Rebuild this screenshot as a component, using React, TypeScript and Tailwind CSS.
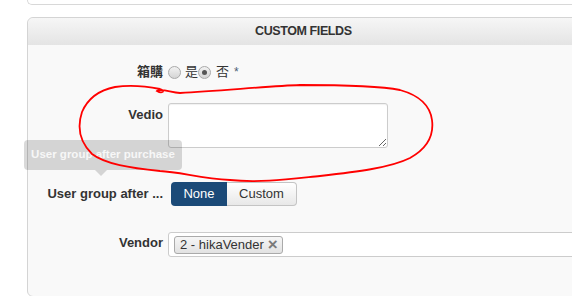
import React from 'react';

const Radio: React.FC<{ checked?: boolean }> = ({ checked }) => (
  <span className="inline-flex h-[13px] w-[13px] items-center justify-center rounded-full border border-[#a9a9a9] bg-gradient-to-b from-[#f2f2f2] to-[#d4d4d4]">
    {checked && <span className="h-[5px] w-[5px] rounded-full bg-[#555]" />}
  </span>
);

const Label: React.FC<{ children: React.ReactNode; className?: string }> = ({ children, className = '' }) => (
  <div className={`w-[135px] shrink-0 text-right text-[13px] font-bold text-[#333] ${className}`}>{children}</div>
);

export default function App() {
  return (
    <div
      className="relative h-[296px] w-[572px] overflow-hidden bg-white"
      style={{ fontFamily: '"Liberation Sans", Arial, "Noto Sans CJK TC", sans-serif' }}
    >
      <div className="pl-[27px]">
        {/* end of previous panel */}
        <div className="h-[5px] w-[560px] rounded-bl-[6px] border-b border-l border-[#d8d8d8] bg-white" />

        <div className="mt-[12px] h-[280px] w-[560px] rounded-[6px] border border-[#d4d4d4] bg-[#f9f9f9]">
          <div className="flex h-[27px] items-center rounded-t-[6px] bg-gradient-to-b from-[#f6f6f6] to-[#e4e4e4] pl-[227px]">
            <span className="text-[12.5px] font-bold tracking-[-0.4px] text-[#333]">CUSTOM FIELDS</span>
          </div>

          {/* 箱購 */}
          <div className="mt-[17px] flex h-[20px] items-center">
            <Label>箱購</Label>
            <div className="ml-[5px] flex items-center text-[13px] text-[#333]">
              <Radio />
              <span className="ml-[4px]">是</span>
              <Radio checked />
              <span className="ml-[5px]">否</span>
              <span className="ml-[5px] text-[12px] text-[#4a5d75]">*</span>
            </div>
          </div>

          {/* Vedio */}
          <div className="mt-[21px] flex items-start">
            <Label className="pt-[2px]">Vedio</Label>
            <textarea className="ml-[5px] h-[45px] w-[220px] resize rounded-[3px] border border-[#ccc] bg-white shadow-[inset_0_1px_1px_rgba(0,0,0,0.06)] outline-none" />
          </div>

          {/* User group after purchase */}
          <div className="mt-[34px] flex items-center">
            <Label>User group after ...</Label>
            <div className="ml-[8px] flex h-[24px] text-[13px]">
              <div className="flex w-[56px] items-center justify-center rounded-l-[4px] bg-[#1b4a78] text-white">None</div>
              <div className="flex w-[70px] items-center justify-center rounded-r-[4px] border border-l-0 border-[#c4c4c4] bg-gradient-to-b from-white to-[#e8e8e8] text-[#333]">
                Custom
              </div>
            </div>
          </div>

          {/* Vendor */}
          <div className="mt-[26px] flex items-start">
            <Label className="pt-[1px]">Vendor</Label>
            <div className="ml-[5px] flex h-[25px] flex-1 items-center rounded-[3px] border border-[#ccc] bg-white pl-[5px]">
              <span className="flex h-[18px] items-center rounded-[3px] border border-[#aaa] bg-gradient-to-b from-[#f6f6f6] to-[#e2e2e2] pl-[5px] pr-[4px] text-[13px] text-[#333]">
                2 - hikaVender
                <span className="ml-[4px] text-[17px] font-bold leading-none text-[#7a7a7a]">×</span>
              </span>
            </div>
          </div>
        </div>
      </div>

      {/* tooltip */}
      <div className="absolute left-[24px] top-[140px]">
        <div className="flex h-[30px] w-[158px] items-center justify-center rounded-[4px] bg-black/15 text-[11.5px] font-bold text-[#f7f7f7]">
          User group after purchase
        </div>
        <div className="ml-[71px] h-0 w-0 border-x-[6px] border-t-[6px] border-x-transparent border-t-black/15" />
      </div>

      {/* red hand-drawn ellipse */}
      <svg className="pointer-events-none absolute left-0 top-0" width="572" height="296">
        <path
          d="M 82 112 C 88 98, 100 90, 115 87 C 135 84, 150 87, 160 89 C 166 91, 162 94, 157 91 C 160 88, 170 92, 180 93 C 220 91, 270 86, 300 85 C 340 85, 380 86, 400 90 C 418 95, 430 105, 432 120 C 434 135, 428 148, 410 158 C 390 168, 355 172, 320 176 C 290 179, 260 183, 230 180 C 200 178, 180 172, 160 171 C 130 168, 105 164, 92 154 C 80 142, 77 127, 82 112"
          fill="none"
          stroke="#ff0000"
          strokeWidth="1.8"
          strokeLinecap="round"
        />
      </svg>
    </div>
  );
}
